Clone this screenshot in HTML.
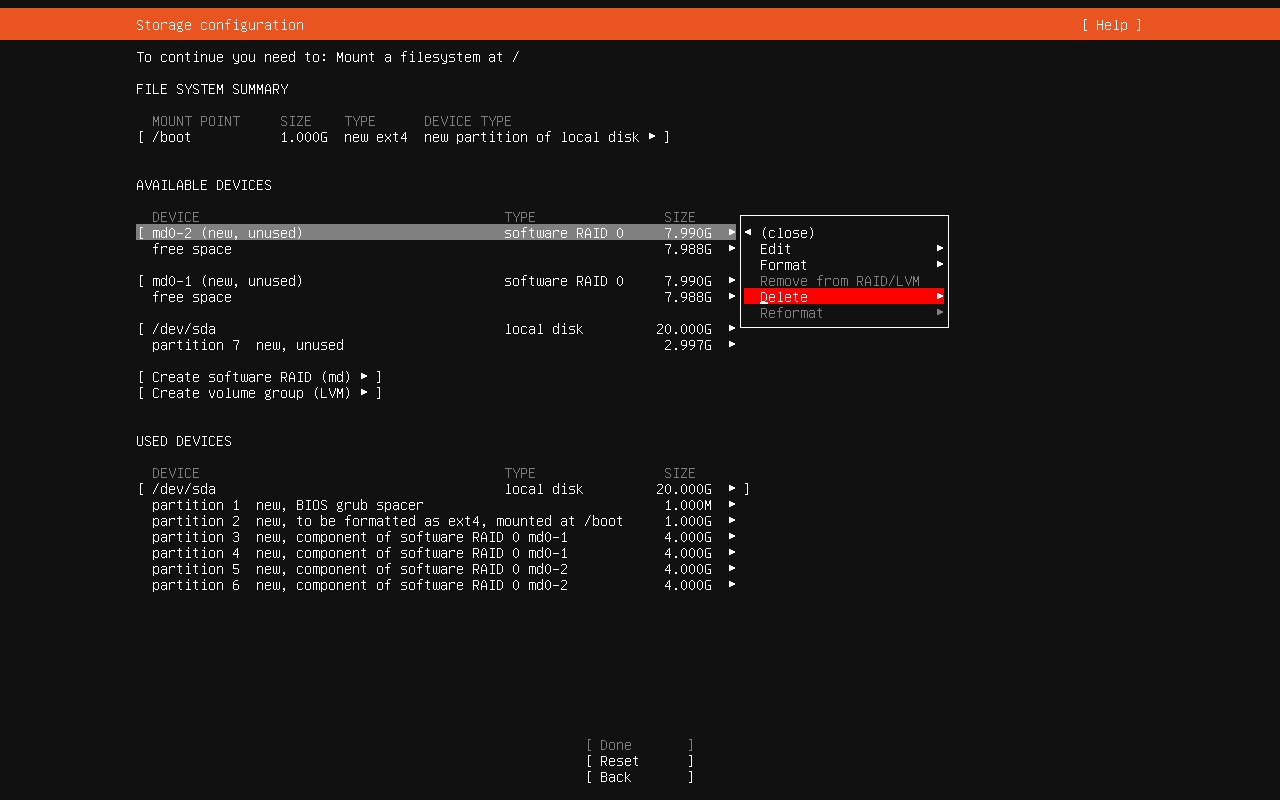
<!DOCTYPE html>
<html><head><meta charset="utf-8"><title>Storage configuration</title>
<style>
html,body{margin:0;padding:0;background:#111111;}
body{width:1280px;height:800px;overflow:hidden;position:relative;font-family:"Liberation Mono",monospace;font-size:13.3333px;line-height:16px;color:#fff;}
.b{position:absolute;}
.r{position:absolute;height:16px;white-space:pre;color:transparent;}
svg{position:absolute;left:0;top:0;shape-rendering:crispEdges;}
</style></head><body>
<div class="b" style="left:0;top:8px;width:1280px;height:32px;background:#e95420"></div>
<div class="b" style="left:136px;top:224px;width:600px;height:16px;background:#808080"></div>
<div class="b" style="left:744px;top:288px;width:200px;height:16px;background:#ff0000"></div>
<div class="b" style="left:740px;top:215px;width:207px;height:111px;border:1px solid #fff"></div>
<div class="b" style="left:760px;top:302px;width:8px;height:2px;background:#fff"></div>
<div id="screen">
<div class="r" style="left:136px;top:16px">Storage configuration                                                                                                 [ Help ]</div>
<div class="r" style="left:136px;top:48px">To continue you need to: Mount a filesystem at /</div>
<div class="r" style="left:136px;top:80px">FILE SYSTEM SUMMARY</div>
<div class="r" style="left:152px;top:112px">MOUNT POINT     SIZE    TYPE      DEVICE TYPE</div>
<div class="r" style="left:136px;top:128px">[ /boot           1.000G  new ext4  new partition of local disk ▶ ]</div>
<div class="r" style="left:136px;top:176px">AVAILABLE DEVICES</div>
<div class="r" style="left:152px;top:208px">DEVICE                                      TYPE                SIZE</div>
<div class="r" style="left:136px;top:224px">[ md0-2 (new, unused)                         software RAID 0     7.990G  ▶ ◀ (close)</div>
<div class="r" style="left:152px;top:240px">free space                                                      7.988G  ▶   Edit                  ▶</div>
<div class="r" style="left:760px;top:256px">Format                ▶</div>
<div class="r" style="left:136px;top:272px">[ md0-1 (new, unused)                         software RAID 0     7.990G  ▶   Remove from RAID/LVM</div>
<div class="r" style="left:152px;top:288px">free space                                                      7.988G  ▶   Delete                ▶</div>
<div class="r" style="left:760px;top:304px">Reformat              ▶</div>
<div class="r" style="left:136px;top:320px">[ /dev/sda                                    local disk         20.000G  ▶</div>
<div class="r" style="left:152px;top:336px">partition 7  new, unused                                        2.997G  ▶</div>
<div class="r" style="left:136px;top:368px">[ Create software RAID (md) ▶ ]</div>
<div class="r" style="left:136px;top:384px">[ Create volume group (LVM) ▶ ]</div>
<div class="r" style="left:136px;top:432px">USED DEVICES</div>
<div class="r" style="left:152px;top:464px">DEVICE                                      TYPE                SIZE</div>
<div class="r" style="left:136px;top:480px">[ /dev/sda                                    local disk         20.000G  ▶ ]</div>
<div class="r" style="left:152px;top:496px">partition 1  new, BIOS grub spacer                              1.000M  ▶</div>
<div class="r" style="left:152px;top:512px">partition 2  new, to be formatted as ext4, mounted at /boot     1.000G  ▶</div>
<div class="r" style="left:152px;top:528px">partition 3  new, component of software RAID 0 md0-1            4.000G  ▶</div>
<div class="r" style="left:152px;top:544px">partition 4  new, component of software RAID 0 md0-1            4.000G  ▶</div>
<div class="r" style="left:152px;top:560px">partition 5  new, component of software RAID 0 md0-2            4.000G  ▶</div>
<div class="r" style="left:152px;top:576px">partition 6  new, component of software RAID 0 md0-2            4.000G  ▶</div>
<div class="r" style="left:584px;top:736px">[ Done       ]</div>
<div class="r" style="left:584px;top:752px">[ Reset      ]</div>
<div class="r" style="left:584px;top:768px">[ Back       ]</div>
</div>
<svg width="1280" height="800" viewBox="0 0 1280 800">
<defs>
<path id="g28" d="M5 3h1v1h-1zM4 4h1v1h-1zM4 5h1v1h-1zM3 6h1v1h-1zM3 7h1v1h-1zM3 8h1v1h-1zM3 9h1v1h-1zM3 10h1v1h-1zM3 11h1v1h-1zM4 12h1v1h-1zM4 13h1v1h-1zM5 14h1v1h-1z"/>
<path id="g29" d="M2 3h1v1h-1zM3 4h1v1h-1zM3 5h1v1h-1zM4 6h1v1h-1zM4 7h1v1h-1zM4 8h1v1h-1zM4 9h1v1h-1zM4 10h1v1h-1zM4 11h1v1h-1zM3 12h1v1h-1zM3 13h1v1h-1zM2 14h1v1h-1z"/>
<path id="g2c" d="M3 12h2v1h-2zM3 13h2v1h-2zM4 14h1v1h-1zM3 15h1v1h-1z"/>
<path id="g2d" d="M1 9h6v1h-6z"/>
<path id="g2e" d="M3 12h2v1h-2zM3 13h2v1h-2z"/>
<path id="g2f" d="M6 3h1v1h-1zM5 4h1v1h-1zM5 5h1v1h-1zM4 6h1v1h-1zM4 7h1v1h-1zM3 8h1v1h-1zM3 9h1v1h-1zM2 10h1v1h-1zM2 11h1v1h-1zM1 12h1v1h-1zM1 13h1v1h-1z"/>
<path id="g30" d="M3 4h2v1h-2zM2 5h1v1h-1zM5 5h1v1h-1zM1 6h1v1h-1zM6 6h1v1h-1zM1 7h1v1h-1zM6 7h1v1h-1zM1 8h1v1h-1zM6 8h1v1h-1zM1 9h1v1h-1zM6 9h1v1h-1zM1 10h1v1h-1zM6 10h1v1h-1zM1 11h1v1h-1zM6 11h1v1h-1zM2 12h1v1h-1zM5 12h1v1h-1zM3 13h2v1h-2z"/>
<path id="g31" d="M4 4h1v1h-1zM3 5h2v1h-2zM2 6h1v1h-1zM4 6h1v1h-1zM4 7h1v1h-1zM4 8h1v1h-1zM4 9h1v1h-1zM4 10h1v1h-1zM4 11h1v1h-1zM4 12h1v1h-1zM2 13h5v1h-5z"/>
<path id="g32" d="M2 4h4v1h-4zM1 5h1v1h-1zM6 5h1v1h-1zM6 6h1v1h-1zM6 7h1v1h-1zM5 8h1v1h-1zM4 9h1v1h-1zM3 10h1v1h-1zM2 11h1v1h-1zM1 12h1v1h-1zM1 13h6v1h-6z"/>
<path id="g33" d="M2 4h4v1h-4zM1 5h1v1h-1zM6 5h1v1h-1zM6 6h1v1h-1zM6 7h1v1h-1zM3 8h3v1h-3zM6 9h1v1h-1zM6 10h1v1h-1zM6 11h1v1h-1zM1 12h1v1h-1zM6 12h1v1h-1zM2 13h4v1h-4z"/>
<path id="g34" d="M5 4h1v1h-1zM4 5h2v1h-2zM3 6h1v1h-1zM5 6h1v1h-1zM3 7h1v1h-1zM5 7h1v1h-1zM2 8h1v1h-1zM5 8h1v1h-1zM1 9h1v1h-1zM5 9h1v1h-1zM1 10h6v1h-6zM5 11h1v1h-1zM5 12h1v1h-1zM5 13h1v1h-1z"/>
<path id="g35" d="M1 4h6v1h-6zM1 5h1v1h-1zM1 6h1v1h-1zM1 7h1v1h-1zM1 8h5v1h-5zM6 9h1v1h-1zM6 10h1v1h-1zM6 11h1v1h-1zM1 12h1v1h-1zM6 12h1v1h-1zM2 13h4v1h-4z"/>
<path id="g36" d="M3 4h3v1h-3zM2 5h1v1h-1zM1 6h1v1h-1zM1 7h1v1h-1zM1 8h5v1h-5zM1 9h1v1h-1zM6 9h1v1h-1zM1 10h1v1h-1zM6 10h1v1h-1zM1 11h1v1h-1zM6 11h1v1h-1zM1 12h1v1h-1zM6 12h1v1h-1zM2 13h4v1h-4z"/>
<path id="g37" d="M1 4h6v1h-6zM6 5h1v1h-1zM6 6h1v1h-1zM5 7h1v1h-1zM5 8h1v1h-1zM4 9h1v1h-1zM4 10h1v1h-1zM4 11h1v1h-1zM4 12h1v1h-1zM4 13h1v1h-1z"/>
<path id="g38" d="M2 4h4v1h-4zM1 5h1v1h-1zM6 5h1v1h-1zM1 6h1v1h-1zM6 6h1v1h-1zM1 7h1v1h-1zM6 7h1v1h-1zM2 8h4v1h-4zM1 9h1v1h-1zM6 9h1v1h-1zM1 10h1v1h-1zM6 10h1v1h-1zM1 11h1v1h-1zM6 11h1v1h-1zM1 12h1v1h-1zM6 12h1v1h-1zM2 13h4v1h-4z"/>
<path id="g39" d="M2 4h4v1h-4zM1 5h1v1h-1zM6 5h1v1h-1zM1 6h1v1h-1zM6 6h1v1h-1zM1 7h1v1h-1zM6 7h1v1h-1zM1 8h1v1h-1zM6 8h1v1h-1zM2 9h5v1h-5zM6 10h1v1h-1zM5 11h1v1h-1zM4 12h1v1h-1zM2 13h2v1h-2z"/>
<path id="g3a" d="M3 6h2v1h-2zM3 7h2v1h-2zM3 11h2v1h-2zM3 12h2v1h-2z"/>
<path id="g3c" d="M5 5h2v1h-2zM3 6h4v1h-4zM1 7h6v1h-6zM1 8h6v1h-6zM3 9h4v1h-4zM5 10h2v1h-2z"/>
<path id="g3e" d="M1 5h2v1h-2zM1 6h4v1h-4zM1 7h6v1h-6zM1 8h6v1h-6zM1 9h4v1h-4zM1 10h2v1h-2z"/>
<path id="g41" d="M3 4h2v1h-2zM2 5h1v1h-1zM5 5h1v1h-1zM2 6h1v1h-1zM5 6h1v1h-1zM1 7h1v1h-1zM6 7h1v1h-1zM1 8h1v1h-1zM6 8h1v1h-1zM1 9h1v1h-1zM6 9h1v1h-1zM1 10h6v1h-6zM1 11h1v1h-1zM6 11h1v1h-1zM1 12h1v1h-1zM6 12h1v1h-1zM1 13h1v1h-1zM6 13h1v1h-1z"/>
<path id="g42" d="M1 4h5v1h-5zM1 5h1v1h-1zM6 5h1v1h-1zM1 6h1v1h-1zM6 6h1v1h-1zM1 7h1v1h-1zM6 7h1v1h-1zM1 8h5v1h-5zM1 9h1v1h-1zM6 9h1v1h-1zM1 10h1v1h-1zM6 10h1v1h-1zM1 11h1v1h-1zM6 11h1v1h-1zM1 12h1v1h-1zM6 12h1v1h-1zM1 13h5v1h-5z"/>
<path id="g43" d="M2 4h4v1h-4zM1 5h1v1h-1zM6 5h1v1h-1zM1 6h1v1h-1zM1 7h1v1h-1zM1 8h1v1h-1zM1 9h1v1h-1zM1 10h1v1h-1zM1 11h1v1h-1zM1 12h1v1h-1zM6 12h1v1h-1zM2 13h4v1h-4z"/>
<path id="g44" d="M1 4h4v1h-4zM1 5h1v1h-1zM5 5h1v1h-1zM1 6h1v1h-1zM6 6h1v1h-1zM1 7h1v1h-1zM6 7h1v1h-1zM1 8h1v1h-1zM6 8h1v1h-1zM1 9h1v1h-1zM6 9h1v1h-1zM1 10h1v1h-1zM6 10h1v1h-1zM1 11h1v1h-1zM6 11h1v1h-1zM1 12h1v1h-1zM5 12h1v1h-1zM1 13h4v1h-4z"/>
<path id="g45" d="M1 4h6v1h-6zM1 5h1v1h-1zM1 6h1v1h-1zM1 7h1v1h-1zM1 8h5v1h-5zM1 9h1v1h-1zM1 10h1v1h-1zM1 11h1v1h-1zM1 12h1v1h-1zM1 13h6v1h-6z"/>
<path id="g46" d="M1 4h6v1h-6zM1 5h1v1h-1zM1 6h1v1h-1zM1 7h1v1h-1zM1 8h5v1h-5zM1 9h1v1h-1zM1 10h1v1h-1zM1 11h1v1h-1zM1 12h1v1h-1zM1 13h1v1h-1z"/>
<path id="g47" d="M2 4h5v1h-5zM1 5h1v1h-1zM1 6h1v1h-1zM1 7h1v1h-1zM1 8h1v1h-1zM1 9h1v1h-1zM4 9h3v1h-3zM1 10h1v1h-1zM6 10h1v1h-1zM1 11h1v1h-1zM6 11h1v1h-1zM1 12h1v1h-1zM6 12h1v1h-1zM2 13h5v1h-5z"/>
<path id="g48" d="M1 4h1v1h-1zM6 4h1v1h-1zM1 5h1v1h-1zM6 5h1v1h-1zM1 6h1v1h-1zM6 6h1v1h-1zM1 7h1v1h-1zM6 7h1v1h-1zM1 8h6v1h-6zM1 9h1v1h-1zM6 9h1v1h-1zM1 10h1v1h-1zM6 10h1v1h-1zM1 11h1v1h-1zM6 11h1v1h-1zM1 12h1v1h-1zM6 12h1v1h-1zM1 13h1v1h-1zM6 13h1v1h-1z"/>
<path id="g49" d="M2 4h5v1h-5zM4 5h1v1h-1zM4 6h1v1h-1zM4 7h1v1h-1zM4 8h1v1h-1zM4 9h1v1h-1zM4 10h1v1h-1zM4 11h1v1h-1zM4 12h1v1h-1zM2 13h5v1h-5z"/>
<path id="g4c" d="M1 4h1v1h-1zM1 5h1v1h-1zM1 6h1v1h-1zM1 7h1v1h-1zM1 8h1v1h-1zM1 9h1v1h-1zM1 10h1v1h-1zM1 11h1v1h-1zM1 12h1v1h-1zM1 13h6v1h-6z"/>
<path id="g4d" d="M1 4h1v1h-1zM6 4h1v1h-1zM1 5h2v1h-2zM5 5h2v1h-2zM1 6h2v1h-2zM5 6h2v1h-2zM1 7h2v1h-2zM5 7h2v1h-2zM1 8h1v1h-1zM3 8h2v1h-2zM6 8h1v1h-1zM1 9h1v1h-1zM3 9h2v1h-2zM6 9h1v1h-1zM1 10h1v1h-1zM6 10h1v1h-1zM1 11h1v1h-1zM6 11h1v1h-1zM1 12h1v1h-1zM6 12h1v1h-1zM1 13h1v1h-1zM6 13h1v1h-1z"/>
<path id="g4e" d="M1 4h1v1h-1zM6 4h1v1h-1zM1 5h2v1h-2zM6 5h1v1h-1zM1 6h2v1h-2zM6 6h1v1h-1zM1 7h1v1h-1zM3 7h1v1h-1zM6 7h1v1h-1zM1 8h1v1h-1zM3 8h1v1h-1zM6 8h1v1h-1zM1 9h1v1h-1zM4 9h1v1h-1zM6 9h1v1h-1zM1 10h1v1h-1zM4 10h1v1h-1zM6 10h1v1h-1zM1 11h1v1h-1zM5 11h2v1h-2zM1 12h1v1h-1zM5 12h2v1h-2zM1 13h1v1h-1zM6 13h1v1h-1z"/>
<path id="g4f" d="M2 4h4v1h-4zM1 5h1v1h-1zM6 5h1v1h-1zM1 6h1v1h-1zM6 6h1v1h-1zM1 7h1v1h-1zM6 7h1v1h-1zM1 8h1v1h-1zM6 8h1v1h-1zM1 9h1v1h-1zM6 9h1v1h-1zM1 10h1v1h-1zM6 10h1v1h-1zM1 11h1v1h-1zM6 11h1v1h-1zM1 12h1v1h-1zM6 12h1v1h-1zM2 13h4v1h-4z"/>
<path id="g50" d="M1 4h5v1h-5zM1 5h1v1h-1zM6 5h1v1h-1zM1 6h1v1h-1zM6 6h1v1h-1zM1 7h1v1h-1zM6 7h1v1h-1zM1 8h1v1h-1zM6 8h1v1h-1zM1 9h5v1h-5zM1 10h1v1h-1zM1 11h1v1h-1zM1 12h1v1h-1zM1 13h1v1h-1z"/>
<path id="g52" d="M1 4h5v1h-5zM1 5h1v1h-1zM6 5h1v1h-1zM1 6h1v1h-1zM6 6h1v1h-1zM1 7h1v1h-1zM6 7h1v1h-1zM1 8h1v1h-1zM6 8h1v1h-1zM1 9h5v1h-5zM1 10h1v1h-1zM4 10h1v1h-1zM1 11h1v1h-1zM5 11h1v1h-1zM1 12h1v1h-1zM5 12h1v1h-1zM1 13h1v1h-1zM6 13h1v1h-1z"/>
<path id="g53" d="M2 4h4v1h-4zM1 5h1v1h-1zM6 5h1v1h-1zM1 6h1v1h-1zM1 7h1v1h-1zM2 8h2v1h-2zM4 9h2v1h-2zM6 10h1v1h-1zM6 11h1v1h-1zM1 12h1v1h-1zM6 12h1v1h-1zM2 13h4v1h-4z"/>
<path id="g54" d="M1 4h7v1h-7zM4 5h1v1h-1zM4 6h1v1h-1zM4 7h1v1h-1zM4 8h1v1h-1zM4 9h1v1h-1zM4 10h1v1h-1zM4 11h1v1h-1zM4 12h1v1h-1zM4 13h1v1h-1z"/>
<path id="g55" d="M1 4h1v1h-1zM6 4h1v1h-1zM1 5h1v1h-1zM6 5h1v1h-1zM1 6h1v1h-1zM6 6h1v1h-1zM1 7h1v1h-1zM6 7h1v1h-1zM1 8h1v1h-1zM6 8h1v1h-1zM1 9h1v1h-1zM6 9h1v1h-1zM1 10h1v1h-1zM6 10h1v1h-1zM1 11h1v1h-1zM6 11h1v1h-1zM1 12h1v1h-1zM6 12h1v1h-1zM2 13h4v1h-4z"/>
<path id="g56" d="M1 4h1v1h-1zM7 4h1v1h-1zM1 5h1v1h-1zM7 5h1v1h-1zM1 6h1v1h-1zM7 6h1v1h-1zM2 7h1v1h-1zM6 7h1v1h-1zM2 8h1v1h-1zM6 8h1v1h-1zM2 9h1v1h-1zM6 9h1v1h-1zM3 10h1v1h-1zM5 10h1v1h-1zM3 11h1v1h-1zM5 11h1v1h-1zM4 12h1v1h-1zM4 13h1v1h-1z"/>
<path id="g59" d="M1 4h1v1h-1zM7 4h1v1h-1zM1 5h1v1h-1zM7 5h1v1h-1zM2 6h1v1h-1zM6 6h1v1h-1zM2 7h1v1h-1zM6 7h1v1h-1zM3 8h1v1h-1zM5 8h1v1h-1zM4 9h1v1h-1zM4 10h1v1h-1zM4 11h1v1h-1zM4 12h1v1h-1zM4 13h1v1h-1z"/>
<path id="g5a" d="M1 4h6v1h-6zM6 5h1v1h-1zM5 6h1v1h-1zM5 7h1v1h-1zM4 8h1v1h-1zM3 9h1v1h-1zM3 10h1v1h-1zM2 11h1v1h-1zM1 12h1v1h-1zM1 13h6v1h-6z"/>
<path id="g5b" d="M4 3h3v1h-3zM4 4h1v1h-1zM4 5h1v1h-1zM4 6h1v1h-1zM4 7h1v1h-1zM4 8h1v1h-1zM4 9h1v1h-1zM4 10h1v1h-1zM4 11h1v1h-1zM4 12h1v1h-1zM4 13h1v1h-1zM4 14h3v1h-3z"/>
<path id="g5d" d="M1 3h3v1h-3zM3 4h1v1h-1zM3 5h1v1h-1zM3 6h1v1h-1zM3 7h1v1h-1zM3 8h1v1h-1zM3 9h1v1h-1zM3 10h1v1h-1zM3 11h1v1h-1zM3 12h1v1h-1zM3 13h1v1h-1zM1 14h3v1h-3z"/>
<path id="g61" d="M2 6h4v1h-4zM1 7h1v1h-1zM6 7h1v1h-1zM6 8h1v1h-1zM2 9h5v1h-5zM1 10h1v1h-1zM6 10h1v1h-1zM1 11h1v1h-1zM6 11h1v1h-1zM1 12h1v1h-1zM5 12h2v1h-2zM2 13h3v1h-3zM6 13h1v1h-1z"/>
<path id="g62" d="M1 3h1v1h-1zM1 4h1v1h-1zM1 5h1v1h-1zM1 6h1v1h-1zM3 6h3v1h-3zM1 7h2v1h-2zM6 7h1v1h-1zM1 8h1v1h-1zM6 8h1v1h-1zM1 9h1v1h-1zM6 9h1v1h-1zM1 10h1v1h-1zM6 10h1v1h-1zM1 11h1v1h-1zM6 11h1v1h-1zM1 12h2v1h-2zM6 12h1v1h-1zM1 13h1v1h-1zM3 13h3v1h-3z"/>
<path id="g63" d="M2 6h4v1h-4zM1 7h1v1h-1zM6 7h1v1h-1zM1 8h1v1h-1zM1 9h1v1h-1zM1 10h1v1h-1zM1 11h1v1h-1zM1 12h1v1h-1zM6 12h1v1h-1zM2 13h4v1h-4z"/>
<path id="g64" d="M6 3h1v1h-1zM6 4h1v1h-1zM6 5h1v1h-1zM2 6h3v1h-3zM6 6h1v1h-1zM1 7h1v1h-1zM5 7h2v1h-2zM1 8h1v1h-1zM6 8h1v1h-1zM1 9h1v1h-1zM6 9h1v1h-1zM1 10h1v1h-1zM6 10h1v1h-1zM1 11h1v1h-1zM6 11h1v1h-1zM1 12h1v1h-1zM5 12h2v1h-2zM2 13h3v1h-3zM6 13h1v1h-1z"/>
<path id="g65" d="M2 6h4v1h-4zM1 7h1v1h-1zM6 7h1v1h-1zM1 8h1v1h-1zM6 8h1v1h-1zM1 9h6v1h-6zM1 10h1v1h-1zM1 11h1v1h-1zM1 12h1v1h-1zM6 12h1v1h-1zM2 13h4v1h-4z"/>
<path id="g66" d="M4 3h3v1h-3zM3 4h1v1h-1zM3 5h1v1h-1zM3 6h1v1h-1zM1 7h5v1h-5zM3 8h1v1h-1zM3 9h1v1h-1zM3 10h1v1h-1zM3 11h1v1h-1zM3 12h1v1h-1zM3 13h1v1h-1z"/>
<path id="g67" d="M6 5h1v1h-1zM2 6h4v1h-4zM1 7h1v1h-1zM5 7h1v1h-1zM1 8h1v1h-1zM5 8h1v1h-1zM1 9h1v1h-1zM5 9h1v1h-1zM2 10h3v1h-3zM2 11h1v1h-1zM2 12h4v1h-4zM1 13h1v1h-1zM6 13h1v1h-1zM1 14h1v1h-1zM6 14h1v1h-1zM2 15h4v1h-4z"/>
<path id="g69" d="M4 3h1v1h-1zM4 4h1v1h-1zM2 6h3v1h-3zM4 7h1v1h-1zM4 8h1v1h-1zM4 9h1v1h-1zM4 10h1v1h-1zM4 11h1v1h-1zM4 12h1v1h-1zM2 13h5v1h-5z"/>
<path id="g6b" d="M1 4h1v1h-1zM1 5h1v1h-1zM1 6h1v1h-1zM5 6h1v1h-1zM1 7h1v1h-1zM4 7h1v1h-1zM1 8h1v1h-1zM3 8h1v1h-1zM1 9h2v1h-2zM1 10h1v1h-1zM3 10h1v1h-1zM1 11h1v1h-1zM4 11h1v1h-1zM1 12h1v1h-1zM5 12h1v1h-1zM1 13h1v1h-1zM6 13h1v1h-1z"/>
<path id="g6c" d="M3 4h2v1h-2zM4 5h1v1h-1zM4 6h1v1h-1zM4 7h1v1h-1zM4 8h1v1h-1zM4 9h1v1h-1zM4 10h1v1h-1zM4 11h1v1h-1zM4 12h1v1h-1zM2 13h5v1h-5z"/>
<path id="g6d" d="M1 6h6v1h-6zM1 7h1v1h-1zM4 7h1v1h-1zM7 7h1v1h-1zM1 8h1v1h-1zM4 8h1v1h-1zM7 8h1v1h-1zM1 9h1v1h-1zM4 9h1v1h-1zM7 9h1v1h-1zM1 10h1v1h-1zM4 10h1v1h-1zM7 10h1v1h-1zM1 11h1v1h-1zM4 11h1v1h-1zM7 11h1v1h-1zM1 12h1v1h-1zM4 12h1v1h-1zM7 12h1v1h-1zM1 13h1v1h-1zM4 13h1v1h-1zM7 13h1v1h-1z"/>
<path id="g6e" d="M1 6h1v1h-1zM3 6h3v1h-3zM1 7h2v1h-2zM6 7h1v1h-1zM1 8h1v1h-1zM6 8h1v1h-1zM1 9h1v1h-1zM6 9h1v1h-1zM1 10h1v1h-1zM6 10h1v1h-1zM1 11h1v1h-1zM6 11h1v1h-1zM1 12h1v1h-1zM6 12h1v1h-1zM1 13h1v1h-1zM6 13h1v1h-1z"/>
<path id="g6f" d="M2 6h4v1h-4zM1 7h1v1h-1zM6 7h1v1h-1zM1 8h1v1h-1zM6 8h1v1h-1zM1 9h1v1h-1zM6 9h1v1h-1zM1 10h1v1h-1zM6 10h1v1h-1zM1 11h1v1h-1zM6 11h1v1h-1zM1 12h1v1h-1zM6 12h1v1h-1zM2 13h4v1h-4z"/>
<path id="g70" d="M1 6h1v1h-1zM3 6h3v1h-3zM1 7h2v1h-2zM6 7h1v1h-1zM1 8h1v1h-1zM6 8h1v1h-1zM1 9h1v1h-1zM6 9h1v1h-1zM1 10h1v1h-1zM6 10h1v1h-1zM1 11h1v1h-1zM6 11h1v1h-1zM1 12h2v1h-2zM6 12h1v1h-1zM1 13h1v1h-1zM3 13h3v1h-3zM1 14h1v1h-1zM1 15h1v1h-1z"/>
<path id="g72" d="M1 6h1v1h-1zM3 6h4v1h-4zM1 7h2v1h-2zM6 7h1v1h-1zM1 8h1v1h-1zM1 9h1v1h-1zM1 10h1v1h-1zM1 11h1v1h-1zM1 12h1v1h-1zM1 13h1v1h-1z"/>
<path id="g73" d="M2 6h5v1h-5zM1 7h1v1h-1zM1 8h1v1h-1zM2 9h4v1h-4zM6 10h1v1h-1zM6 11h1v1h-1zM6 12h1v1h-1zM1 13h5v1h-5z"/>
<path id="g74" d="M3 4h1v1h-1zM3 5h1v1h-1zM1 6h5v1h-5zM3 7h1v1h-1zM3 8h1v1h-1zM3 9h1v1h-1zM3 10h1v1h-1zM3 11h1v1h-1zM3 12h1v1h-1zM4 13h2v1h-2z"/>
<path id="g75" d="M1 6h1v1h-1zM6 6h1v1h-1zM1 7h1v1h-1zM6 7h1v1h-1zM1 8h1v1h-1zM6 8h1v1h-1zM1 9h1v1h-1zM6 9h1v1h-1zM1 10h1v1h-1zM6 10h1v1h-1zM1 11h1v1h-1zM6 11h1v1h-1zM1 12h1v1h-1zM5 12h2v1h-2zM2 13h3v1h-3zM6 13h1v1h-1z"/>
<path id="g76" d="M1 6h1v1h-1zM6 6h1v1h-1zM1 7h1v1h-1zM6 7h1v1h-1zM1 8h1v1h-1zM6 8h1v1h-1zM2 9h1v1h-1zM5 9h1v1h-1zM2 10h1v1h-1zM5 10h1v1h-1zM2 11h1v1h-1zM5 11h1v1h-1zM3 12h2v1h-2zM3 13h2v1h-2z"/>
<path id="g77" d="M1 6h1v1h-1zM4 6h1v1h-1zM7 6h1v1h-1zM1 7h1v1h-1zM4 7h1v1h-1zM7 7h1v1h-1zM1 8h1v1h-1zM4 8h1v1h-1zM7 8h1v1h-1zM1 9h1v1h-1zM4 9h1v1h-1zM7 9h1v1h-1zM1 10h1v1h-1zM4 10h1v1h-1zM7 10h1v1h-1zM1 11h1v1h-1zM4 11h1v1h-1zM7 11h1v1h-1zM1 12h1v1h-1zM4 12h1v1h-1zM7 12h1v1h-1zM2 13h2v1h-2zM5 13h2v1h-2z"/>
<path id="g78" d="M1 6h1v1h-1zM6 6h1v1h-1zM1 7h1v1h-1zM6 7h1v1h-1zM2 8h1v1h-1zM5 8h1v1h-1zM3 9h2v1h-2zM3 10h2v1h-2zM2 11h1v1h-1zM5 11h1v1h-1zM1 12h1v1h-1zM6 12h1v1h-1zM1 13h1v1h-1zM6 13h1v1h-1z"/>
<path id="g79" d="M1 6h1v1h-1zM6 6h1v1h-1zM1 7h1v1h-1zM6 7h1v1h-1zM1 8h1v1h-1zM6 8h1v1h-1zM1 9h1v1h-1zM6 9h1v1h-1zM1 10h1v1h-1zM6 10h1v1h-1zM2 11h1v1h-1zM6 11h1v1h-1zM3 12h1v1h-1zM6 12h1v1h-1zM4 13h3v1h-3zM6 14h1v1h-1zM2 15h4v1h-4z"/>
</defs>
<g fill="#ffffff" transform="translate(0,16)"><use href="#g53" x="136"/><use href="#g74" x="144"/><use href="#g6f" x="152"/><use href="#g72" x="160"/><use href="#g61" x="168"/><use href="#g67" x="176"/><use href="#g65" x="184"/><use href="#g63" x="200"/><use href="#g6f" x="208"/><use href="#g6e" x="216"/><use href="#g66" x="224"/><use href="#g69" x="232"/><use href="#g67" x="240"/><use href="#g75" x="248"/><use href="#g72" x="256"/><use href="#g61" x="264"/><use href="#g74" x="272"/><use href="#g69" x="280"/><use href="#g6f" x="288"/><use href="#g6e" x="296"/><use href="#g5b" x="1080"/><use href="#g48" x="1096"/><use href="#g65" x="1104"/><use href="#g6c" x="1112"/><use href="#g70" x="1120"/><use href="#g5d" x="1136"/></g>
<g fill="#ffffff" transform="translate(0,48)"><use href="#g54" x="136"/><use href="#g6f" x="144"/><use href="#g63" x="160"/><use href="#g6f" x="168"/><use href="#g6e" x="176"/><use href="#g74" x="184"/><use href="#g69" x="192"/><use href="#g6e" x="200"/><use href="#g75" x="208"/><use href="#g65" x="216"/><use href="#g79" x="232"/><use href="#g6f" x="240"/><use href="#g75" x="248"/><use href="#g6e" x="264"/><use href="#g65" x="272"/><use href="#g65" x="280"/><use href="#g64" x="288"/><use href="#g74" x="304"/><use href="#g6f" x="312"/><use href="#g3a" x="320"/><use href="#g4d" x="336"/><use href="#g6f" x="344"/><use href="#g75" x="352"/><use href="#g6e" x="360"/><use href="#g74" x="368"/><use href="#g61" x="384"/><use href="#g66" x="400"/><use href="#g69" x="408"/><use href="#g6c" x="416"/><use href="#g65" x="424"/><use href="#g73" x="432"/><use href="#g79" x="440"/><use href="#g73" x="448"/><use href="#g74" x="456"/><use href="#g65" x="464"/><use href="#g6d" x="472"/><use href="#g61" x="488"/><use href="#g74" x="496"/><use href="#g2f" x="512"/></g>
<g fill="#ffffff" transform="translate(0,80)"><use href="#g46" x="136"/><use href="#g49" x="144"/><use href="#g4c" x="152"/><use href="#g45" x="160"/><use href="#g53" x="176"/><use href="#g59" x="184"/><use href="#g53" x="192"/><use href="#g54" x="200"/><use href="#g45" x="208"/><use href="#g4d" x="216"/><use href="#g53" x="232"/><use href="#g55" x="240"/><use href="#g4d" x="248"/><use href="#g4d" x="256"/><use href="#g41" x="264"/><use href="#g52" x="272"/><use href="#g59" x="280"/></g>
<g fill="#808080" transform="translate(0,112)"><use href="#g4d" x="152"/><use href="#g4f" x="160"/><use href="#g55" x="168"/><use href="#g4e" x="176"/><use href="#g54" x="184"/><use href="#g50" x="200"/><use href="#g4f" x="208"/><use href="#g49" x="216"/><use href="#g4e" x="224"/><use href="#g54" x="232"/><use href="#g53" x="280"/><use href="#g49" x="288"/><use href="#g5a" x="296"/><use href="#g45" x="304"/><use href="#g54" x="344"/><use href="#g59" x="352"/><use href="#g50" x="360"/><use href="#g45" x="368"/><use href="#g44" x="424"/><use href="#g45" x="432"/><use href="#g56" x="440"/><use href="#g49" x="448"/><use href="#g43" x="456"/><use href="#g45" x="464"/><use href="#g54" x="480"/><use href="#g59" x="488"/><use href="#g50" x="496"/><use href="#g45" x="504"/></g>
<g fill="#ffffff" transform="translate(0,128)"><use href="#g5b" x="136"/><use href="#g2f" x="152"/><use href="#g62" x="160"/><use href="#g6f" x="168"/><use href="#g6f" x="176"/><use href="#g74" x="184"/><use href="#g31" x="280"/><use href="#g2e" x="288"/><use href="#g30" x="296"/><use href="#g30" x="304"/><use href="#g30" x="312"/><use href="#g47" x="320"/><use href="#g6e" x="344"/><use href="#g65" x="352"/><use href="#g77" x="360"/><use href="#g65" x="376"/><use href="#g78" x="384"/><use href="#g74" x="392"/><use href="#g34" x="400"/><use href="#g6e" x="424"/><use href="#g65" x="432"/><use href="#g77" x="440"/><use href="#g70" x="456"/><use href="#g61" x="464"/><use href="#g72" x="472"/><use href="#g74" x="480"/><use href="#g69" x="488"/><use href="#g74" x="496"/><use href="#g69" x="504"/><use href="#g6f" x="512"/><use href="#g6e" x="520"/><use href="#g6f" x="536"/><use href="#g66" x="544"/><use href="#g6c" x="560"/><use href="#g6f" x="568"/><use href="#g63" x="576"/><use href="#g61" x="584"/><use href="#g6c" x="592"/><use href="#g64" x="608"/><use href="#g69" x="616"/><use href="#g73" x="624"/><use href="#g6b" x="632"/><use href="#g3e" x="648"/><use href="#g5d" x="664"/></g>
<g fill="#ffffff" transform="translate(0,176)"><use href="#g41" x="136"/><use href="#g56" x="144"/><use href="#g41" x="152"/><use href="#g49" x="160"/><use href="#g4c" x="168"/><use href="#g41" x="176"/><use href="#g42" x="184"/><use href="#g4c" x="192"/><use href="#g45" x="200"/><use href="#g44" x="216"/><use href="#g45" x="224"/><use href="#g56" x="232"/><use href="#g49" x="240"/><use href="#g43" x="248"/><use href="#g45" x="256"/><use href="#g53" x="264"/></g>
<g fill="#808080" transform="translate(0,208)"><use href="#g44" x="152"/><use href="#g45" x="160"/><use href="#g56" x="168"/><use href="#g49" x="176"/><use href="#g43" x="184"/><use href="#g45" x="192"/><use href="#g54" x="504"/><use href="#g59" x="512"/><use href="#g50" x="520"/><use href="#g45" x="528"/><use href="#g53" x="664"/><use href="#g49" x="672"/><use href="#g5a" x="680"/><use href="#g45" x="688"/></g>
<g fill="#808080" transform="translate(0,464)"><use href="#g44" x="152"/><use href="#g45" x="160"/><use href="#g56" x="168"/><use href="#g49" x="176"/><use href="#g43" x="184"/><use href="#g45" x="192"/><use href="#g54" x="504"/><use href="#g59" x="512"/><use href="#g50" x="520"/><use href="#g45" x="528"/><use href="#g53" x="664"/><use href="#g49" x="672"/><use href="#g5a" x="680"/><use href="#g45" x="688"/></g>
<g fill="#ffffff" transform="translate(0,224)"><use href="#g5b" x="136"/><use href="#g6d" x="152"/><use href="#g64" x="160"/><use href="#g30" x="168"/><use href="#g2d" x="176"/><use href="#g32" x="184"/><use href="#g28" x="200"/><use href="#g6e" x="208"/><use href="#g65" x="216"/><use href="#g77" x="224"/><use href="#g2c" x="232"/><use href="#g75" x="248"/><use href="#g6e" x="256"/><use href="#g75" x="264"/><use href="#g73" x="272"/><use href="#g65" x="280"/><use href="#g64" x="288"/><use href="#g29" x="296"/><use href="#g73" x="504"/><use href="#g6f" x="512"/><use href="#g66" x="520"/><use href="#g74" x="528"/><use href="#g77" x="536"/><use href="#g61" x="544"/><use href="#g72" x="552"/><use href="#g65" x="560"/><use href="#g52" x="576"/><use href="#g41" x="584"/><use href="#g49" x="592"/><use href="#g44" x="600"/><use href="#g30" x="616"/><use href="#g37" x="664"/><use href="#g2e" x="672"/><use href="#g39" x="680"/><use href="#g39" x="688"/><use href="#g30" x="696"/><use href="#g47" x="704"/><use href="#g3e" x="728"/><use href="#g3c" x="744"/><use href="#g28" x="760"/><use href="#g63" x="768"/><use href="#g6c" x="776"/><use href="#g6f" x="784"/><use href="#g73" x="792"/><use href="#g65" x="800"/><use href="#g29" x="808"/></g>
<g fill="#ffffff" transform="translate(0,240)"><use href="#g66" x="152"/><use href="#g72" x="160"/><use href="#g65" x="168"/><use href="#g65" x="176"/><use href="#g73" x="192"/><use href="#g70" x="200"/><use href="#g61" x="208"/><use href="#g63" x="216"/><use href="#g65" x="224"/><use href="#g37" x="664"/><use href="#g2e" x="672"/><use href="#g39" x="680"/><use href="#g38" x="688"/><use href="#g38" x="696"/><use href="#g47" x="704"/><use href="#g3e" x="728"/><use href="#g45" x="760"/><use href="#g64" x="768"/><use href="#g69" x="776"/><use href="#g74" x="784"/><use href="#g3e" x="936"/></g>
<g fill="#ffffff" transform="translate(0,272)"><use href="#g5b" x="136"/><use href="#g6d" x="152"/><use href="#g64" x="160"/><use href="#g30" x="168"/><use href="#g2d" x="176"/><use href="#g31" x="184"/><use href="#g28" x="200"/><use href="#g6e" x="208"/><use href="#g65" x="216"/><use href="#g77" x="224"/><use href="#g2c" x="232"/><use href="#g75" x="248"/><use href="#g6e" x="256"/><use href="#g75" x="264"/><use href="#g73" x="272"/><use href="#g65" x="280"/><use href="#g64" x="288"/><use href="#g29" x="296"/><use href="#g73" x="504"/><use href="#g6f" x="512"/><use href="#g66" x="520"/><use href="#g74" x="528"/><use href="#g77" x="536"/><use href="#g61" x="544"/><use href="#g72" x="552"/><use href="#g65" x="560"/><use href="#g52" x="576"/><use href="#g41" x="584"/><use href="#g49" x="592"/><use href="#g44" x="600"/><use href="#g30" x="616"/><use href="#g37" x="664"/><use href="#g2e" x="672"/><use href="#g39" x="680"/><use href="#g39" x="688"/><use href="#g30" x="696"/><use href="#g47" x="704"/><use href="#g3e" x="728"/></g>
<g fill="#ffffff" transform="translate(0,288)"><use href="#g66" x="152"/><use href="#g72" x="160"/><use href="#g65" x="168"/><use href="#g65" x="176"/><use href="#g73" x="192"/><use href="#g70" x="200"/><use href="#g61" x="208"/><use href="#g63" x="216"/><use href="#g65" x="224"/><use href="#g37" x="664"/><use href="#g2e" x="672"/><use href="#g39" x="680"/><use href="#g38" x="688"/><use href="#g38" x="696"/><use href="#g47" x="704"/><use href="#g3e" x="728"/><use href="#g44" x="760"/><use href="#g65" x="768"/><use href="#g6c" x="776"/><use href="#g65" x="784"/><use href="#g74" x="792"/><use href="#g65" x="800"/><use href="#g3e" x="936"/></g>
<g fill="#ffffff" transform="translate(0,320)"><use href="#g5b" x="136"/><use href="#g2f" x="152"/><use href="#g64" x="160"/><use href="#g65" x="168"/><use href="#g76" x="176"/><use href="#g2f" x="184"/><use href="#g73" x="192"/><use href="#g64" x="200"/><use href="#g61" x="208"/><use href="#g6c" x="504"/><use href="#g6f" x="512"/><use href="#g63" x="520"/><use href="#g61" x="528"/><use href="#g6c" x="536"/><use href="#g64" x="552"/><use href="#g69" x="560"/><use href="#g73" x="568"/><use href="#g6b" x="576"/><use href="#g32" x="656"/><use href="#g30" x="664"/><use href="#g2e" x="672"/><use href="#g30" x="680"/><use href="#g30" x="688"/><use href="#g30" x="696"/><use href="#g47" x="704"/><use href="#g3e" x="728"/></g>
<g fill="#ffffff" transform="translate(0,336)"><use href="#g70" x="152"/><use href="#g61" x="160"/><use href="#g72" x="168"/><use href="#g74" x="176"/><use href="#g69" x="184"/><use href="#g74" x="192"/><use href="#g69" x="200"/><use href="#g6f" x="208"/><use href="#g6e" x="216"/><use href="#g37" x="232"/><use href="#g6e" x="256"/><use href="#g65" x="264"/><use href="#g77" x="272"/><use href="#g2c" x="280"/><use href="#g75" x="296"/><use href="#g6e" x="304"/><use href="#g75" x="312"/><use href="#g73" x="320"/><use href="#g65" x="328"/><use href="#g64" x="336"/><use href="#g32" x="664"/><use href="#g2e" x="672"/><use href="#g39" x="680"/><use href="#g39" x="688"/><use href="#g37" x="696"/><use href="#g47" x="704"/><use href="#g3e" x="728"/></g>
<g fill="#ffffff" transform="translate(0,368)"><use href="#g5b" x="136"/><use href="#g43" x="152"/><use href="#g72" x="160"/><use href="#g65" x="168"/><use href="#g61" x="176"/><use href="#g74" x="184"/><use href="#g65" x="192"/><use href="#g73" x="208"/><use href="#g6f" x="216"/><use href="#g66" x="224"/><use href="#g74" x="232"/><use href="#g77" x="240"/><use href="#g61" x="248"/><use href="#g72" x="256"/><use href="#g65" x="264"/><use href="#g52" x="280"/><use href="#g41" x="288"/><use href="#g49" x="296"/><use href="#g44" x="304"/><use href="#g28" x="320"/><use href="#g6d" x="328"/><use href="#g64" x="336"/><use href="#g29" x="344"/><use href="#g3e" x="360"/><use href="#g5d" x="376"/></g>
<g fill="#ffffff" transform="translate(0,384)"><use href="#g5b" x="136"/><use href="#g43" x="152"/><use href="#g72" x="160"/><use href="#g65" x="168"/><use href="#g61" x="176"/><use href="#g74" x="184"/><use href="#g65" x="192"/><use href="#g76" x="208"/><use href="#g6f" x="216"/><use href="#g6c" x="224"/><use href="#g75" x="232"/><use href="#g6d" x="240"/><use href="#g65" x="248"/><use href="#g67" x="264"/><use href="#g72" x="272"/><use href="#g6f" x="280"/><use href="#g75" x="288"/><use href="#g70" x="296"/><use href="#g28" x="312"/><use href="#g4c" x="320"/><use href="#g56" x="328"/><use href="#g4d" x="336"/><use href="#g29" x="344"/><use href="#g3e" x="360"/><use href="#g5d" x="376"/></g>
<g fill="#ffffff" transform="translate(0,432)"><use href="#g55" x="136"/><use href="#g53" x="144"/><use href="#g45" x="152"/><use href="#g44" x="160"/><use href="#g44" x="176"/><use href="#g45" x="184"/><use href="#g56" x="192"/><use href="#g49" x="200"/><use href="#g43" x="208"/><use href="#g45" x="216"/><use href="#g53" x="224"/></g>
<g fill="#ffffff" transform="translate(0,480)"><use href="#g5b" x="136"/><use href="#g2f" x="152"/><use href="#g64" x="160"/><use href="#g65" x="168"/><use href="#g76" x="176"/><use href="#g2f" x="184"/><use href="#g73" x="192"/><use href="#g64" x="200"/><use href="#g61" x="208"/><use href="#g6c" x="504"/><use href="#g6f" x="512"/><use href="#g63" x="520"/><use href="#g61" x="528"/><use href="#g6c" x="536"/><use href="#g64" x="552"/><use href="#g69" x="560"/><use href="#g73" x="568"/><use href="#g6b" x="576"/><use href="#g32" x="656"/><use href="#g30" x="664"/><use href="#g2e" x="672"/><use href="#g30" x="680"/><use href="#g30" x="688"/><use href="#g30" x="696"/><use href="#g47" x="704"/><use href="#g3e" x="728"/><use href="#g5d" x="744"/></g>
<g fill="#ffffff" transform="translate(0,496)"><use href="#g70" x="152"/><use href="#g61" x="160"/><use href="#g72" x="168"/><use href="#g74" x="176"/><use href="#g69" x="184"/><use href="#g74" x="192"/><use href="#g69" x="200"/><use href="#g6f" x="208"/><use href="#g6e" x="216"/><use href="#g31" x="232"/><use href="#g6e" x="256"/><use href="#g65" x="264"/><use href="#g77" x="272"/><use href="#g2c" x="280"/><use href="#g42" x="296"/><use href="#g49" x="304"/><use href="#g4f" x="312"/><use href="#g53" x="320"/><use href="#g67" x="336"/><use href="#g72" x="344"/><use href="#g75" x="352"/><use href="#g62" x="360"/><use href="#g73" x="376"/><use href="#g70" x="384"/><use href="#g61" x="392"/><use href="#g63" x="400"/><use href="#g65" x="408"/><use href="#g72" x="416"/><use href="#g31" x="664"/><use href="#g2e" x="672"/><use href="#g30" x="680"/><use href="#g30" x="688"/><use href="#g30" x="696"/><use href="#g4d" x="704"/><use href="#g3e" x="728"/></g>
<g fill="#ffffff" transform="translate(0,512)"><use href="#g70" x="152"/><use href="#g61" x="160"/><use href="#g72" x="168"/><use href="#g74" x="176"/><use href="#g69" x="184"/><use href="#g74" x="192"/><use href="#g69" x="200"/><use href="#g6f" x="208"/><use href="#g6e" x="216"/><use href="#g32" x="232"/><use href="#g6e" x="256"/><use href="#g65" x="264"/><use href="#g77" x="272"/><use href="#g2c" x="280"/><use href="#g74" x="296"/><use href="#g6f" x="304"/><use href="#g62" x="320"/><use href="#g65" x="328"/><use href="#g66" x="344"/><use href="#g6f" x="352"/><use href="#g72" x="360"/><use href="#g6d" x="368"/><use href="#g61" x="376"/><use href="#g74" x="384"/><use href="#g74" x="392"/><use href="#g65" x="400"/><use href="#g64" x="408"/><use href="#g61" x="424"/><use href="#g73" x="432"/><use href="#g65" x="448"/><use href="#g78" x="456"/><use href="#g74" x="464"/><use href="#g34" x="472"/><use href="#g2c" x="480"/><use href="#g6d" x="496"/><use href="#g6f" x="504"/><use href="#g75" x="512"/><use href="#g6e" x="520"/><use href="#g74" x="528"/><use href="#g65" x="536"/><use href="#g64" x="544"/><use href="#g61" x="560"/><use href="#g74" x="568"/><use href="#g2f" x="584"/><use href="#g62" x="592"/><use href="#g6f" x="600"/><use href="#g6f" x="608"/><use href="#g74" x="616"/><use href="#g31" x="664"/><use href="#g2e" x="672"/><use href="#g30" x="680"/><use href="#g30" x="688"/><use href="#g30" x="696"/><use href="#g47" x="704"/><use href="#g3e" x="728"/></g>
<g fill="#ffffff" transform="translate(0,528)"><use href="#g70" x="152"/><use href="#g61" x="160"/><use href="#g72" x="168"/><use href="#g74" x="176"/><use href="#g69" x="184"/><use href="#g74" x="192"/><use href="#g69" x="200"/><use href="#g6f" x="208"/><use href="#g6e" x="216"/><use href="#g33" x="232"/><use href="#g6e" x="256"/><use href="#g65" x="264"/><use href="#g77" x="272"/><use href="#g2c" x="280"/><use href="#g63" x="296"/><use href="#g6f" x="304"/><use href="#g6d" x="312"/><use href="#g70" x="320"/><use href="#g6f" x="328"/><use href="#g6e" x="336"/><use href="#g65" x="344"/><use href="#g6e" x="352"/><use href="#g74" x="360"/><use href="#g6f" x="376"/><use href="#g66" x="384"/><use href="#g73" x="400"/><use href="#g6f" x="408"/><use href="#g66" x="416"/><use href="#g74" x="424"/><use href="#g77" x="432"/><use href="#g61" x="440"/><use href="#g72" x="448"/><use href="#g65" x="456"/><use href="#g52" x="472"/><use href="#g41" x="480"/><use href="#g49" x="488"/><use href="#g44" x="496"/><use href="#g30" x="512"/><use href="#g6d" x="528"/><use href="#g64" x="536"/><use href="#g30" x="544"/><use href="#g2d" x="552"/><use href="#g31" x="560"/><use href="#g34" x="664"/><use href="#g2e" x="672"/><use href="#g30" x="680"/><use href="#g30" x="688"/><use href="#g30" x="696"/><use href="#g47" x="704"/><use href="#g3e" x="728"/></g>
<g fill="#ffffff" transform="translate(0,544)"><use href="#g70" x="152"/><use href="#g61" x="160"/><use href="#g72" x="168"/><use href="#g74" x="176"/><use href="#g69" x="184"/><use href="#g74" x="192"/><use href="#g69" x="200"/><use href="#g6f" x="208"/><use href="#g6e" x="216"/><use href="#g34" x="232"/><use href="#g6e" x="256"/><use href="#g65" x="264"/><use href="#g77" x="272"/><use href="#g2c" x="280"/><use href="#g63" x="296"/><use href="#g6f" x="304"/><use href="#g6d" x="312"/><use href="#g70" x="320"/><use href="#g6f" x="328"/><use href="#g6e" x="336"/><use href="#g65" x="344"/><use href="#g6e" x="352"/><use href="#g74" x="360"/><use href="#g6f" x="376"/><use href="#g66" x="384"/><use href="#g73" x="400"/><use href="#g6f" x="408"/><use href="#g66" x="416"/><use href="#g74" x="424"/><use href="#g77" x="432"/><use href="#g61" x="440"/><use href="#g72" x="448"/><use href="#g65" x="456"/><use href="#g52" x="472"/><use href="#g41" x="480"/><use href="#g49" x="488"/><use href="#g44" x="496"/><use href="#g30" x="512"/><use href="#g6d" x="528"/><use href="#g64" x="536"/><use href="#g30" x="544"/><use href="#g2d" x="552"/><use href="#g31" x="560"/><use href="#g34" x="664"/><use href="#g2e" x="672"/><use href="#g30" x="680"/><use href="#g30" x="688"/><use href="#g30" x="696"/><use href="#g47" x="704"/><use href="#g3e" x="728"/></g>
<g fill="#ffffff" transform="translate(0,560)"><use href="#g70" x="152"/><use href="#g61" x="160"/><use href="#g72" x="168"/><use href="#g74" x="176"/><use href="#g69" x="184"/><use href="#g74" x="192"/><use href="#g69" x="200"/><use href="#g6f" x="208"/><use href="#g6e" x="216"/><use href="#g35" x="232"/><use href="#g6e" x="256"/><use href="#g65" x="264"/><use href="#g77" x="272"/><use href="#g2c" x="280"/><use href="#g63" x="296"/><use href="#g6f" x="304"/><use href="#g6d" x="312"/><use href="#g70" x="320"/><use href="#g6f" x="328"/><use href="#g6e" x="336"/><use href="#g65" x="344"/><use href="#g6e" x="352"/><use href="#g74" x="360"/><use href="#g6f" x="376"/><use href="#g66" x="384"/><use href="#g73" x="400"/><use href="#g6f" x="408"/><use href="#g66" x="416"/><use href="#g74" x="424"/><use href="#g77" x="432"/><use href="#g61" x="440"/><use href="#g72" x="448"/><use href="#g65" x="456"/><use href="#g52" x="472"/><use href="#g41" x="480"/><use href="#g49" x="488"/><use href="#g44" x="496"/><use href="#g30" x="512"/><use href="#g6d" x="528"/><use href="#g64" x="536"/><use href="#g30" x="544"/><use href="#g2d" x="552"/><use href="#g32" x="560"/><use href="#g34" x="664"/><use href="#g2e" x="672"/><use href="#g30" x="680"/><use href="#g30" x="688"/><use href="#g30" x="696"/><use href="#g47" x="704"/><use href="#g3e" x="728"/></g>
<g fill="#ffffff" transform="translate(0,576)"><use href="#g70" x="152"/><use href="#g61" x="160"/><use href="#g72" x="168"/><use href="#g74" x="176"/><use href="#g69" x="184"/><use href="#g74" x="192"/><use href="#g69" x="200"/><use href="#g6f" x="208"/><use href="#g6e" x="216"/><use href="#g36" x="232"/><use href="#g6e" x="256"/><use href="#g65" x="264"/><use href="#g77" x="272"/><use href="#g2c" x="280"/><use href="#g63" x="296"/><use href="#g6f" x="304"/><use href="#g6d" x="312"/><use href="#g70" x="320"/><use href="#g6f" x="328"/><use href="#g6e" x="336"/><use href="#g65" x="344"/><use href="#g6e" x="352"/><use href="#g74" x="360"/><use href="#g6f" x="376"/><use href="#g66" x="384"/><use href="#g73" x="400"/><use href="#g6f" x="408"/><use href="#g66" x="416"/><use href="#g74" x="424"/><use href="#g77" x="432"/><use href="#g61" x="440"/><use href="#g72" x="448"/><use href="#g65" x="456"/><use href="#g52" x="472"/><use href="#g41" x="480"/><use href="#g49" x="488"/><use href="#g44" x="496"/><use href="#g30" x="512"/><use href="#g6d" x="528"/><use href="#g64" x="536"/><use href="#g30" x="544"/><use href="#g2d" x="552"/><use href="#g32" x="560"/><use href="#g34" x="664"/><use href="#g2e" x="672"/><use href="#g30" x="680"/><use href="#g30" x="688"/><use href="#g30" x="696"/><use href="#g47" x="704"/><use href="#g3e" x="728"/></g>
<g fill="#808080" transform="translate(0,736)"><use href="#g5b" x="584"/><use href="#g44" x="600"/><use href="#g6f" x="608"/><use href="#g6e" x="616"/><use href="#g65" x="624"/><use href="#g5d" x="688"/></g>
<g fill="#ffffff" transform="translate(0,752)"><use href="#g5b" x="584"/><use href="#g52" x="600"/><use href="#g65" x="608"/><use href="#g73" x="616"/><use href="#g65" x="624"/><use href="#g74" x="632"/><use href="#g5d" x="688"/></g>
<g fill="#ffffff" transform="translate(0,768)"><use href="#g5b" x="584"/><use href="#g42" x="600"/><use href="#g61" x="608"/><use href="#g63" x="616"/><use href="#g6b" x="624"/><use href="#g5d" x="688"/></g>
<g fill="#ffffff" transform="translate(0,256)"><use href="#g46" x="760"/><use href="#g6f" x="768"/><use href="#g72" x="776"/><use href="#g6d" x="784"/><use href="#g61" x="792"/><use href="#g74" x="800"/><use href="#g3e" x="936"/></g>
<g fill="#808080" transform="translate(0,272)"><use href="#g52" x="760"/><use href="#g65" x="768"/><use href="#g6d" x="776"/><use href="#g6f" x="784"/><use href="#g76" x="792"/><use href="#g65" x="800"/><use href="#g66" x="816"/><use href="#g72" x="824"/><use href="#g6f" x="832"/><use href="#g6d" x="840"/><use href="#g52" x="856"/><use href="#g41" x="864"/><use href="#g49" x="872"/><use href="#g44" x="880"/><use href="#g2f" x="888"/><use href="#g4c" x="896"/><use href="#g56" x="904"/><use href="#g4d" x="912"/></g>
<g fill="#808080" transform="translate(0,304)"><use href="#g52" x="760"/><use href="#g65" x="768"/><use href="#g66" x="776"/><use href="#g6f" x="784"/><use href="#g72" x="792"/><use href="#g6d" x="800"/><use href="#g61" x="808"/><use href="#g74" x="816"/><use href="#g3e" x="936"/></g>
</svg>
</body></html>
